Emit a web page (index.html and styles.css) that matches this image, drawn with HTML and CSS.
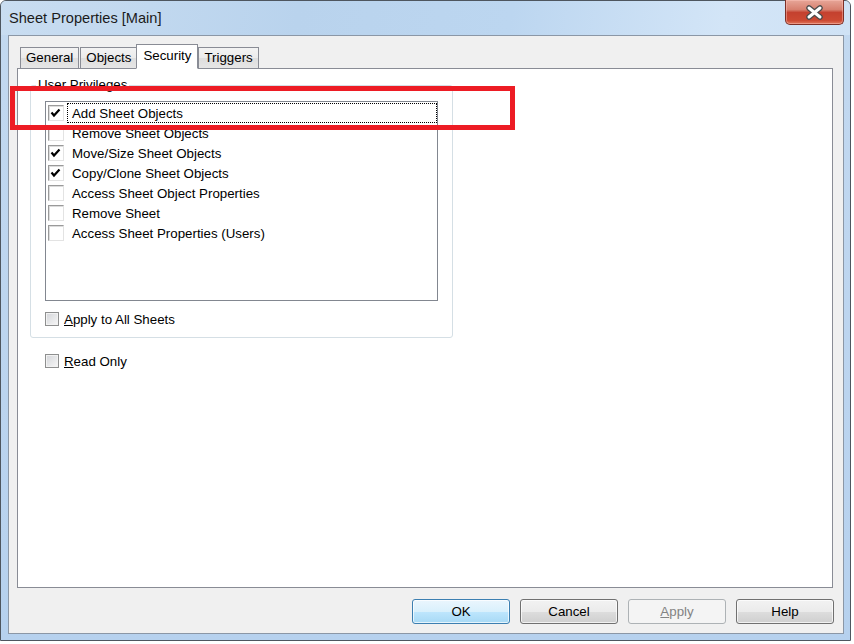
FILE: index.html
```html
<!DOCTYPE html>
<html lang="en">
<head>
    <meta charset="UTF-8">
    <meta name="viewport" content="width=device-width, initial-scale=1.0">
    <title>Sheet Properties [Main]</title>
    <link rel="stylesheet" href="styles.css">
</head>
<body>

<div class="window">
    <div class="titlebar">
        <span class="title">Sheet Properties [Main]</span>
        <button class="close" title="Close">
            <svg width="19" height="15" viewBox="0 0 19 15">
                <path d="M4 3 L15 12 M15 3 L4 12" stroke="#4b4b4b" stroke-width="5.5" stroke-linecap="round"/>
                <path d="M4 3 L15 12 M15 3 L4 12" stroke="#fff" stroke-width="3" stroke-linecap="round"/>
            </svg>
        </button>
    </div>

    <div class="client">
        <div class="tabs">
            <div class="tab">General</div>
            <div class="tab">Objects</div>
            <div class="tab active">Security</div>
            <div class="tab">Triggers</div>
        </div>

        <div class="panel">
            <fieldset class="group">
                <legend>User Privileges</legend>
                <ul class="listbox">
                    <li class="item focus"><span class="lbox checked"></span><span class="label">Add Sheet Objects</span></li>
                    <li class="item"><span class="lbox"></span><span class="label">Remove Sheet Objects</span></li>
                    <li class="item"><span class="lbox checked"></span><span class="label">Move/Size Sheet Objects</span></li>
                    <li class="item"><span class="lbox checked"></span><span class="label">Copy/Clone Sheet Objects</span></li>
                    <li class="item"><span class="lbox"></span><span class="label">Access Sheet Object Properties</span></li>
                    <li class="item"><span class="lbox"></span><span class="label">Remove Sheet</span></li>
                    <li class="item"><span class="lbox"></span><span class="label">Access Sheet Properties (Users)</span></li>
                </ul>
                <label class="check"><span class="cbox"></span><span><u>A</u>pply to All Sheets</span></label>
            </fieldset>

            <label class="check readonly"><span class="cbox"></span><span><u>R</u>ead Only</span></label>
        </div>

        <div class="buttons">
            <button class="btn default">OK</button>
            <button class="btn">Cancel</button>
            <button class="btn" disabled><u>A</u>pply</button>
            <button class="btn">Help</button>
        </div>
    </div>
</div>

<!-- marcador rojo sobre la primera fila -->
<div class="highlight"></div>

</body>
</html>
```

FILE: styles.css
```css
* {
    box-sizing: border-box;
}

body {
    margin: 0;
    position: relative;
    background-color: #fff;
    font-family: "Liberation Sans", Arial, sans-serif;
    font-size: 13.3px;
    color: #000;
}

.window {
    width: 851px;
    height: 641px;
    display: flex;
    flex-direction: column;
    border: 1px solid #4e565f;
    border-radius: 6px 6px 0 0;
    background: linear-gradient(#c3d9f0, #b6d1ee);
}

.titlebar {
    height: 34px;
    display: flex;
    justify-content: space-between;
    align-items: center;
    border-radius: 5px 5px 0 0;
    background: linear-gradient(100deg, #c9ddf1 0%, #b9d3ed 35%, #bcd6f0 60%, #d3e5f7 85%, #cfe2f5 100%);
}

.title {
    padding-left: 8px;
    font-size: 14.6px;
    color: #1b1b1b;
}

.close {
    align-self: flex-start;
    width: 59px;
    height: 25px;
    margin-top: -1px;
    margin-right: 6px;
    padding: 0;
    display: flex;
    justify-content: center;
    align-items: center;
    border: 1px solid #7d2f26;
    border-top: none;
    border-radius: 0 0 5px 5px;
    background: linear-gradient(#e7a698 0%, #d7806f 40%, #c4412f 52%, #cc4932 85%, #e0765c 100%);
    box-shadow: inset 0 0 0 1px rgba(255, 200, 190, 0.45);
}

.client {
    flex: 1;
    margin: 0 6px 6px 7px;
    padding: 8px 9px 0 8px;
    display: flex;
    flex-direction: column;
    border: 1px solid #8b97a6;
    background-color: #f0f0f0;
}

/* pestañas */
.tabs {
    height: 25px;
    display: flex;
    align-items: flex-end;
    padding-left: 3px;
    margin-bottom: -1px;
    position: relative;
    z-index: 1;
}

.tab {
    height: 22px;
    line-height: 20px;
    padding: 0 5px;
    margin-right: 1px;
    border: 1px solid #898c95;
    background: linear-gradient(#f3f3f3, #ebebeb 50%, #dedede 51%, #e6e6e6);
}

.tab.active {
    height: 25px;
    line-height: 22px;
    padding: 0 6px;
    margin: 0 0 0 -2px;
    border-bottom-color: #fff;
    background: #fff;
}

.panel {
    height: 520px;
    margin-right: 1px;
    border: 1px solid #898c95;
    background-color: #fff;
}

.group {
    width: 423px;
    margin: 8px 0 0 12px;
    padding: 8px 0 7px 0;
    border: 1px solid #d5dfe5;
    border-radius: 3px;
}

.group legend {
    margin-left: 5px;
    padding: 0 2px;
    line-height: 16px;
}

.listbox {
    width: 393px;
    height: 200px;
    margin: 0 0 0 14px;
    padding: 1px 0 0 2px;
    list-style: none;
    border: 1px solid #828790;
}

.item {
    height: 20px;
    display: flex;
    align-items: center;
}

.lbox {
    flex: none;
    width: 16px;
    height: 16px;
    margin-right: 3px;
    border: 1px solid;
    border-color: #9a9a9a #e3e3e3 #e3e3e3 #9a9a9a;
    box-shadow: inset 1px 1px 0 #dcdcdc;
    background: #fff;
}

.lbox.checked {
    background: #fff url("data:image/svg+xml,%3Csvg xmlns='http://www.w3.org/2000/svg' width='14' height='14'%3E%3Cpath d='M2.5 6.5 L5 9.5 L10.5 3.5' fill='none' stroke='%23000' stroke-width='2.2'/%3E%3C/svg%3E") no-repeat 0 0;
}

.label {
    flex: 1;
    height: 20px;
    line-height: 19px;
    padding-left: 4px;
    border: 1px dotted transparent;
}

.item.focus .label {
    border-color: #000;
}

.check {
    height: 20px;
    display: flex;
    align-items: center;
}

.group .check {
    margin: 8px 0 0 14px;
}

.group {
    padding-bottom: 8px;
}

.check.readonly {
    margin: 13px 0 0 27px;
}

.cbox {
    width: 14px;
    height: 14px;
    margin-right: 5px;
    border: 1px solid #8e8f8f;
    background: linear-gradient(135deg, #d3d5d9, #f7f7f7);
    box-shadow: inset 0 0 0 1px #f2f2f2;
}

/* botones */
.buttons {
    display: flex;
    justify-content: flex-end;
    gap: 10px;
    margin-top: 11px;
}

.btn {
    width: 98px;
    height: 25px;
    padding: 0;
    font: inherit;
    color: #000;
    border: 1px solid #707070;
    border-radius: 3px;
    background: linear-gradient(#f2f2f2 0%, #ebebeb 50%, #dddddd 51%, #cfcfcf 100%);
    box-shadow: inset 0 0 0 1px rgba(255, 255, 255, 0.7);
}

.btn.default {
    border-color: #3c7fb1;
    background: linear-gradient(#eaf6fd 0%, #d9f0fc 50%, #bee6fd 51%, #a7d9f5 100%);
}

.btn:disabled {
    color: #838383;
    border-color: #adb2b5;
    background: #f4f4f4;
    box-shadow: none;
}

.highlight {
    position: absolute;
    left: 10px;
    top: 86px;
    width: 505px;
    height: 44px;
    border: 5px solid #ed1c24;
}
```
